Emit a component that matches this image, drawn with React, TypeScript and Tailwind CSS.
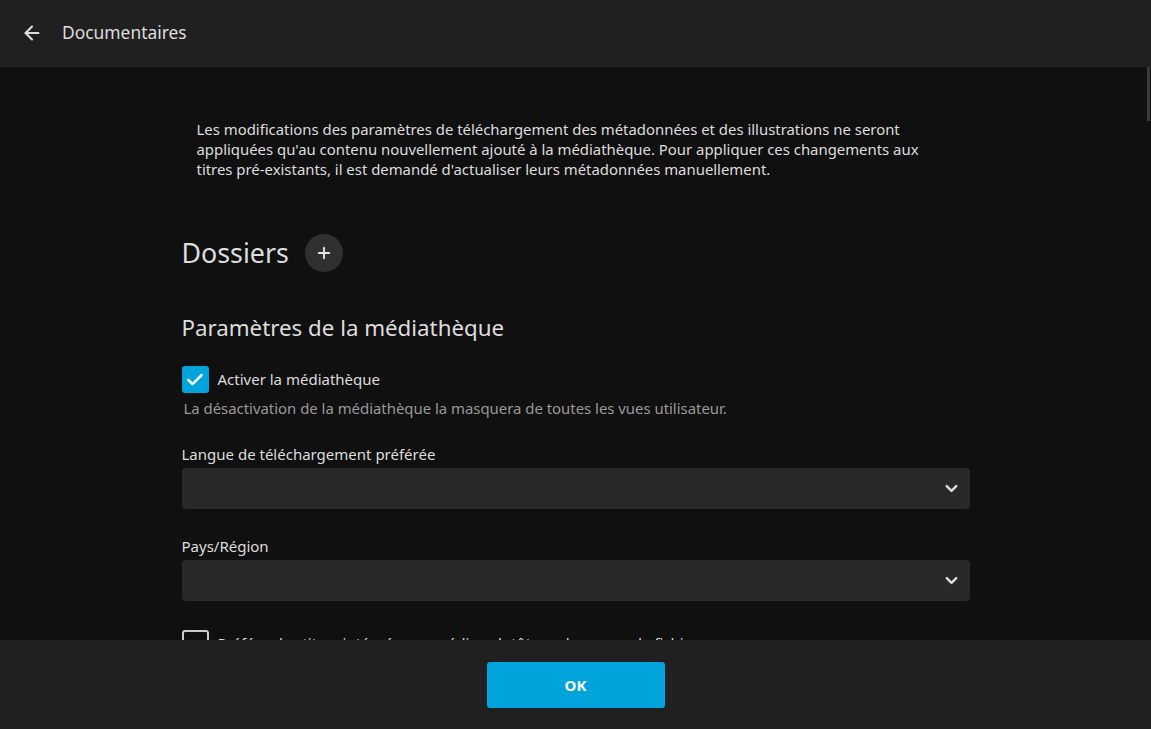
import { ArrowLeft, ChevronDown, Plus, Check } from "lucide-react";

const font = { fontFamily: '"Noto Sans", "Open Sans", sans-serif' };

function SelectField({ label }: { label: string }) {
  return (
    <div className="flex flex-col">
      <label className="text-[15px] leading-[20px] text-[#dddddd]">{label}</label>
      <div className="mt-[4px] h-[41px] w-full rounded-[4px] bg-[#292929] flex items-center justify-end pr-[9px]">
        <ChevronDown className="w-[19px] h-[19px] text-[#dddddd]" strokeWidth={3} />
      </div>
    </div>
  );
}

export default function App() {
  return (
    <div className="w-[1151px] h-[729px] flex flex-col bg-[#101010] overflow-hidden" style={font}>
      <header className="h-[67px] shrink-0 bg-[#202020] flex items-center pb-[2px]">
        <button className="ml-[20px] w-[24px] h-[24px] flex items-center justify-center text-[#dddddd]">
          <ArrowLeft className="w-[22px] h-[22px]" strokeWidth={2.3} />
        </button>
        <h1 className="ml-[18px] text-[17.4px] text-[#dddddd]">Documentaires</h1>
      </header>

      <main className="relative flex-1 overflow-hidden">
        <div className="absolute right-[1px] top-0 w-[3px] h-[54px] bg-[#3a3a3a]" />
        <div className="mx-auto w-[788px]">
          <p className="mt-[52px] pl-[15px] text-[14.9px] leading-[20px] text-[#dddddd]">
            Les modifications des paramètres de téléchargement des métadonnées et des illustrations ne seront
            <br />
            appliquées qu'au contenu nouvellement ajouté à la médiathèque. Pour appliquer ces changements aux
            <br />
            titres pré-existants, il est demandé d'actualiser leurs métadonnées manuellement.
          </p>

          <div className="mt-[55px] flex items-center h-[38px]">
            <h2 className="text-[26.8px] text-[#dddddd]">Dossiers</h2>
            <button className="ml-[16px] w-[38px] h-[38px] rounded-full bg-[#303030] flex items-center justify-center text-[#e5e5e5]">
              <Plus className="w-[18px] h-[18px]" strokeWidth={2.5} />
            </button>
          </div>

          <h3 className="mt-[41px] text-[22.3px] leading-[30px] text-[#dddddd]">Paramètres de la médiathèque</h3>

          <div className="mt-[23px] flex items-center">
            <div className="w-[27px] h-[27px] rounded-[3px] bg-[#00a4dc] flex items-center justify-center">
              <Check className="w-[20px] h-[20px] text-white" strokeWidth={3} />
            </div>
            <span className="ml-[9px] text-[15px] text-[#dddddd]">Activer la médiathèque</span>
          </div>
          <p className="mt-[5px] ml-[2px] text-[14.9px] leading-[20px] text-[#999999]">
            La désactivation de la médiathèque la masquera de toutes les vues utilisateur.
          </p>

          <div className="mt-[26px]">
            <SelectField label="Langue de téléchargement préférée" />
          </div>
          <div className="mt-[27px]">
            <SelectField label="Pays/Région" />
          </div>

          <div className="mt-[29px] flex items-center">
            <div className="w-[27px] h-[27px] rounded-[3px] border-[2px] border-[#cccccc]" />
            <span className="ml-[9px] text-[15px] text-[#dddddd]">
              Préférer les titres intégrés aux médias plutôt que les noms de fichiers
            </span>
          </div>
        </div>
      </main>

      <footer className="h-[89px] shrink-0 bg-[#202020] flex justify-center pt-[22px]">
        <button className="w-[178px] h-[46px] rounded-[3px] bg-[#00a4dc] text-white text-[15px] font-bold">
          OK
        </button>
      </footer>
    </div>
  );
}
